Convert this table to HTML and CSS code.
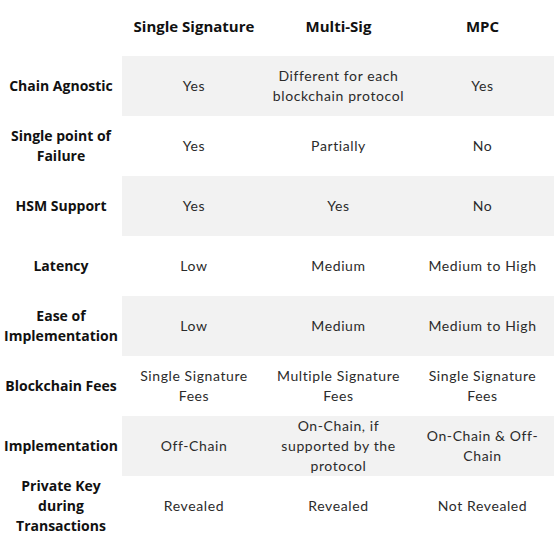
FILE: index.html
```html
<!DOCTYPE html>
<html>
<head>
<meta charset="utf-8">
<link rel="stylesheet" href="styles.css">
</head>
<body>
<div class="table">
  <div class="row head">
    <div class="label"></div>
    <div class="cell h">Single Signature</div>
    <div class="cell h">Multi-Sig</div>
    <div class="cell h">MPC</div>
  </div>
  <div class="row shade">
    <div class="label">Chain Agnostic</div>
    <div class="cell">Yes</div>
    <div class="cell">Different for each<br>blockchain protocol</div>
    <div class="cell">Yes</div>
  </div>
  <div class="row">
    <div class="label">Single point of<br>Failure</div>
    <div class="cell">Yes</div>
    <div class="cell">Partially</div>
    <div class="cell">No</div>
  </div>
  <div class="row shade">
    <div class="label">HSM Support</div>
    <div class="cell">Yes</div>
    <div class="cell">Yes</div>
    <div class="cell">No</div>
  </div>
  <div class="row">
    <div class="label">Latency</div>
    <div class="cell">Low</div>
    <div class="cell">Medium</div>
    <div class="cell">Medium to High</div>
  </div>
  <div class="row shade">
    <div class="label">Ease of<br>Implementation</div>
    <div class="cell">Low</div>
    <div class="cell">Medium</div>
    <div class="cell">Medium to High</div>
  </div>
  <div class="row">
    <div class="label">Blockchain Fees</div>
    <div class="cell">Single Signature<br>Fees</div>
    <div class="cell">Multiple Signature<br>Fees</div>
    <div class="cell">Single Signature<br>Fees</div>
  </div>
  <div class="row shade">
    <div class="label">Implementation</div>
    <div class="cell">Off-Chain</div>
    <div class="cell">On-Chain, if<br>supported by the<br>protocol</div>
    <div class="cell">On-Chain &amp; Off-<br>Chain</div>
  </div>
  <div class="row">
    <div class="label">Private Key<br>during<br>Transactions</div>
    <div class="cell">Revealed</div>
    <div class="cell">Revealed</div>
    <div class="cell">Not Revealed</div>
  </div>
</div>
</body>
</html>
```
FILE: styles.css
```css
html, body {
  margin: 0;
  padding: 0;
  background: #ffffff;
}
.table {
  width: 554px;
  display: flex;
  flex-direction: column;
}
.row {
  display: grid;
  grid-template-columns: 122px 144px 145px 143px;
  height: 60px;
}
.row.head {
  height: 56px;
}
.row.shade .cell {
  background: #f2f2f2;
}
.label {
  display: flex;
  align-items: center;
  justify-content: center;
  text-align: center;
  font-family: "Open Sans", "Noto Sans", sans-serif;
  font-weight: 700;
  font-size: 14px;
  line-height: 20px;
  color: #111;
}
.cell {
  display: flex;
  align-items: center;
  justify-content: center;
  text-align: center;
  font-family: Lato, "Liberation Sans", sans-serif;
  font-size: 14px;
  line-height: 20px;
  color: #2b2b2b;
  letter-spacing: 0.6px;
}
.cell.h {
  font-family: "Open Sans", "Noto Sans", sans-serif;
  font-weight: 700;
  font-size: 15px;
  color: #111;
  letter-spacing: 0;
  padding-bottom: 4px;
  box-sizing: border-box;
}
```
